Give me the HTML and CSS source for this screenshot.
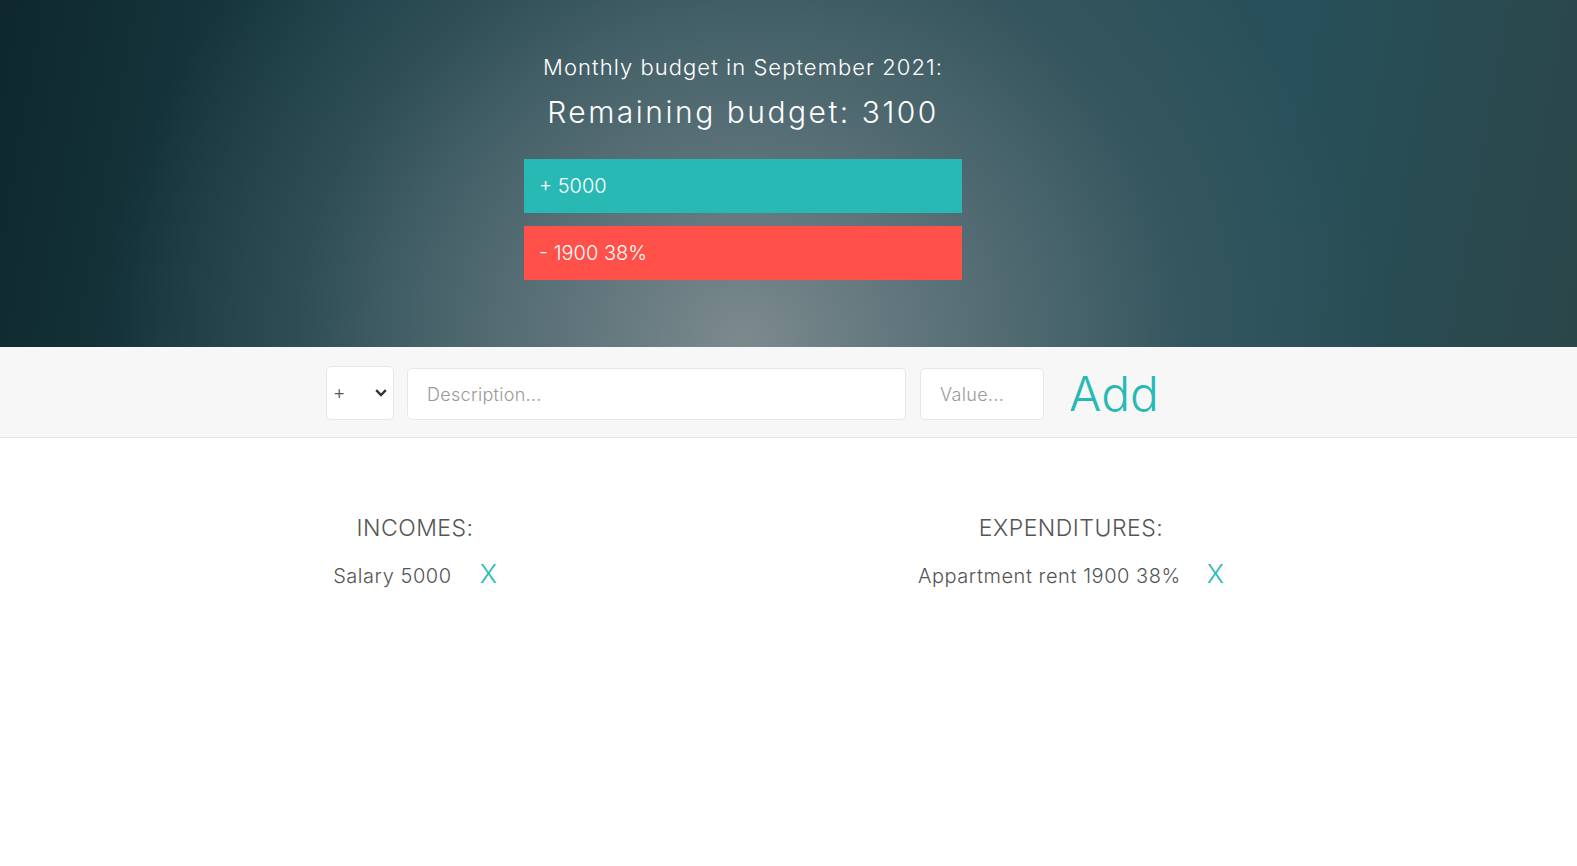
FILE: index.html
```html
<!DOCTYPE html>
<html lang="en">
<head>
<meta charset="utf-8">
<title>Budget</title>
<link rel="stylesheet" href="styles.css">
</head>
<body>
<header class="top">
  <div class="top-inner">
    <h1 class="month">Monthly budget in September 2021:</h1>
    <h2 class="remaining">Remaining budget: 3100</h2>
    <div class="bar bar-income">+ 5000</div>
    <div class="bar bar-expense">- 1900 38%</div>
  </div>
</header>
<section class="add">
  <div class="add-inner">
    <select class="add-type">
      <option>+</option>
      <option>-</option>
    </select>
    <input class="field add-desc" type="text" placeholder="Description...">
    <input class="field add-value" type="text" placeholder="Value...">
    <button class="add-btn" type="button">Add</button>
  </div>
</section>
<main class="lists">
  <div class="lists-inner">
    <div class="col">
      <h3 class="col-title">INCOMES:</h3>
      <div class="item"><span class="item-text">Salary 5000</span><button class="del" type="button">X</button></div>
    </div>
    <div class="col">
      <h3 class="col-title">EXPENDITURES:</h3>
      <div class="item"><span class="item-text">Appartment rent 1900 38%</span><button class="del del-exp" type="button">X</button></div>
    </div>
  </div>
</main>
</body>
</html>
```
FILE: styles.css
```css
* { box-sizing: border-box; }
html, body { margin: 0; padding: 0; }
body {
  font-family: "Inter", "Open Sans", sans-serif;
  font-weight: 300;
  color: #555;
  background: #fff;
}
.top {
  height: 347px;
  background:
    radial-gradient(ellipse 640px 580px at 743px 340px, rgba(124,138,142,1) 0%, rgba(105,124,130,0.95) 20%, rgba(84,108,115,0.85) 45%, rgba(62,90,98,0.55) 70%, rgba(40,70,78,0) 100%),
    linear-gradient(100deg, #0e282d 0%, #1a3d45 22%, #2a4e57 45%, #2c5059 60%, #27505a 80%, #2b4649 100%);
}
.top-inner {
  width: 1486px;
  display: flex;
  flex-direction: column;
  align-items: center;
  padding-top: 53px;
}
.month {
  margin: 0;
  font-size: 22px;
  line-height: 28px;
  font-weight: 300;
  color: #fff;
  letter-spacing: 1.05px;
}
.remaining {
  margin: 13px 0 0;
  font-size: 30px;
  line-height: 36px;
  font-weight: 300;
  color: #fff;
  letter-spacing: 2.5px;
}
.bar {
  width: 438px;
  height: 54px;
  display: flex;
  align-items: center;
  padding-left: 15px;
  color: #fff;
  font-size: 20px;
  font-weight: 300;
}
.bar-income { background: #28b9b5; margin-top: 29px; }
.bar-expense { background: #ff5049; margin-top: 13px; }

.add {
  height: 91px;
  background: #f7f7f7;
  border-bottom: 1px solid #e7e7e7;
}
.add-inner {
  width: 1486px;
  height: 90px;
  display: flex;
  align-items: center;
  justify-content: center;
  padding-top: 4px;
  padding-right: 1px;
}
.add-type {
  -webkit-appearance: none;
  appearance: none;
  width: 68px;
  height: 54px;
  margin-top: -3px;
  border: 1px solid #e7e7e7;
  border-radius: 5px;
  background: #fff url("data:image/svg+xml,%3Csvg xmlns='http://www.w3.org/2000/svg' width='12' height='8' viewBox='0 0 12 8'%3E%3Cpolyline points='1.2,1.2 6,6 10.8,1.2' fill='none' stroke='%23333' stroke-width='2.4'/%3E%3C/svg%3E") no-repeat right 6px center;
  color: #555;
  font-family: inherit;
  font-size: 19px;
  font-weight: 300;
  padding-left: 6px;
}
.field {
  height: 52px;
  border: 1px solid #e7e7e7;
  border-radius: 5px;
  background: #fff;
  font-family: inherit;
  font-size: 18px;
  font-weight: 300;
  color: #555;
  padding: 0 19px;
  outline: none;
}
.field::placeholder { color: #999; letter-spacing: 0.3px; }
.add-desc { width: 499px; margin-left: 13px; }
.add-value { width: 124px; margin-left: 14px; }
.add-btn {
  margin-left: 25px;
  border: 0;
  background: none;
  padding: 0;
  color: #28b9b5;
  font-family: inherit;
  font-size: 48px;
  font-weight: 300;
  line-height: 52px;
  cursor: pointer;
}

.lists-inner {
  width: 1312px;
  margin-left: 87px;
  display: flex;
  padding-top: 75px;
}
.col {
  flex: 0 0 656px;
  display: flex;
  flex-direction: column;
  align-items: center;
}
.col-title {
  margin: 0;
  font-size: 23px;
  line-height: 30px;
  font-weight: 300;
  color: #555;
  letter-spacing: 0.5px;
}
.item {
  margin-top: 18px;
  display: flex;
  align-items: center;
}
.item-text {
  font-size: 20px;
  line-height: 30px;
  color: #555;
  letter-spacing: 0.55px;
}
.del {
  margin-left: 28px;
  border: 0;
  background: none;
  padding: 0;
  color: #28b9b5;
  font-family: inherit;
  font-size: 26px;
  font-weight: 300;
  line-height: 30px;
  margin-top: -4px;
}
.del-exp { margin-left: 26px; }
```
